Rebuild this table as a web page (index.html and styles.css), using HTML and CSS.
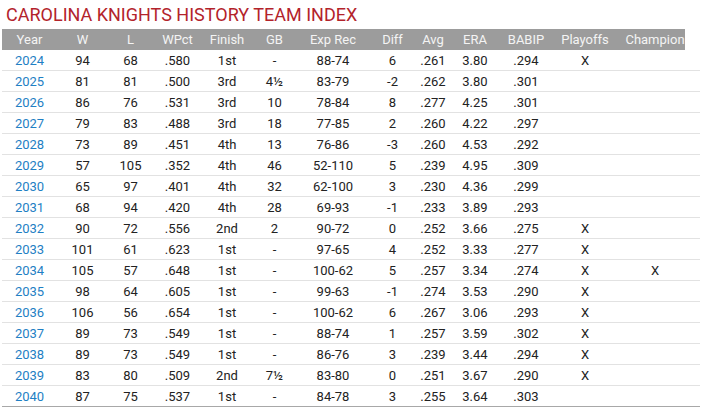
FILE: index.html
```html
<!DOCTYPE html>
<html>
<head>
<meta charset="utf-8">
<link rel="stylesheet" href="styles.css">
</head>
<body>
<h1 class="title">CAROLINA KNIGHTS HISTORY TEAM INDEX</h1>
<table class="index">
<colgroup>
<col class="c-year"><col class="c-w"><col class="c-l"><col class="c-wpct"><col class="c-finish"><col class="c-gb"><col class="c-exp"><col class="c-diff"><col class="c-avg"><col class="c-era"><col class="c-babip"><col class="c-po"><col class="c-champ">
</colgroup>
<thead>
<tr><th>Year</th><th>W</th><th>L</th><th>WPct</th><th>Finish</th><th>GB</th><th>Exp Rec</th><th>Diff</th><th>Avg</th><th>ERA</th><th>BABIP</th><th>Playoffs</th><th class="last">Champion</th></tr>
</thead>
<tbody>
<tr><td class="yr">2024</td><td>94</td><td>68</td><td>.580</td><td>1st</td><td>-</td><td>88-74</td><td>6</td><td>.261</td><td>3.80</td><td>.294</td><td>X</td><td class="last"></td></tr>
<tr><td class="yr">2025</td><td>81</td><td>81</td><td>.500</td><td>3rd</td><td>4½</td><td>83-79</td><td>-2</td><td>.262</td><td>3.80</td><td>.301</td><td></td><td class="last"></td></tr>
<tr><td class="yr">2026</td><td>86</td><td>76</td><td>.531</td><td>3rd</td><td>10</td><td>78-84</td><td>8</td><td>.277</td><td>4.25</td><td>.301</td><td></td><td class="last"></td></tr>
<tr><td class="yr">2027</td><td>79</td><td>83</td><td>.488</td><td>3rd</td><td>18</td><td>77-85</td><td>2</td><td>.260</td><td>4.22</td><td>.297</td><td></td><td class="last"></td></tr>
<tr><td class="yr">2028</td><td>73</td><td>89</td><td>.451</td><td>4th</td><td>13</td><td>76-86</td><td>-3</td><td>.260</td><td>4.53</td><td>.292</td><td></td><td class="last"></td></tr>
<tr><td class="yr">2029</td><td>57</td><td>105</td><td>.352</td><td>4th</td><td>46</td><td>52-110</td><td>5</td><td>.239</td><td>4.95</td><td>.309</td><td></td><td class="last"></td></tr>
<tr><td class="yr">2030</td><td>65</td><td>97</td><td>.401</td><td>4th</td><td>32</td><td>62-100</td><td>3</td><td>.230</td><td>4.36</td><td>.299</td><td></td><td class="last"></td></tr>
<tr><td class="yr">2031</td><td>68</td><td>94</td><td>.420</td><td>4th</td><td>28</td><td>69-93</td><td>-1</td><td>.233</td><td>3.89</td><td>.293</td><td></td><td class="last"></td></tr>
<tr><td class="yr">2032</td><td>90</td><td>72</td><td>.556</td><td>2nd</td><td>2</td><td>90-72</td><td>0</td><td>.252</td><td>3.66</td><td>.275</td><td>X</td><td class="last"></td></tr>
<tr><td class="yr">2033</td><td>101</td><td>61</td><td>.623</td><td>1st</td><td>-</td><td>97-65</td><td>4</td><td>.252</td><td>3.33</td><td>.277</td><td>X</td><td class="last"></td></tr>
<tr><td class="yr">2034</td><td>105</td><td>57</td><td>.648</td><td>1st</td><td>-</td><td>100-62</td><td>5</td><td>.257</td><td>3.34</td><td>.274</td><td>X</td><td class="last">X</td></tr>
<tr><td class="yr">2035</td><td>98</td><td>64</td><td>.605</td><td>1st</td><td>-</td><td>99-63</td><td>-1</td><td>.274</td><td>3.53</td><td>.290</td><td>X</td><td class="last"></td></tr>
<tr><td class="yr">2036</td><td>106</td><td>56</td><td>.654</td><td>1st</td><td>-</td><td>100-62</td><td>6</td><td>.267</td><td>3.06</td><td>.293</td><td>X</td><td class="last"></td></tr>
<tr><td class="yr">2037</td><td>89</td><td>73</td><td>.549</td><td>1st</td><td>-</td><td>88-74</td><td>1</td><td>.257</td><td>3.59</td><td>.302</td><td>X</td><td class="last"></td></tr>
<tr><td class="yr">2038</td><td>89</td><td>73</td><td>.549</td><td>1st</td><td>-</td><td>86-76</td><td>3</td><td>.239</td><td>3.44</td><td>.294</td><td>X</td><td class="last"></td></tr>
<tr><td class="yr">2039</td><td>83</td><td>80</td><td>.509</td><td>2nd</td><td>7½</td><td>83-80</td><td>0</td><td>.251</td><td>3.67</td><td>.290</td><td>X</td><td class="last"></td></tr>
<tr><td class="yr">2040</td><td>87</td><td>75</td><td>.537</td><td>1st</td><td>-</td><td>84-78</td><td>3</td><td>.255</td><td>3.64</td><td>.303</td><td></td><td class="last"></td></tr>
</tbody>
</table>
</body>
</html>
```
FILE: styles.css
```css
html, body {
  margin: 0;
  padding: 0;
  background: #ffffff;
}
body {
  padding-left: 2px;
  font-family: Roboto, "Liberation Sans", sans-serif;
  color: #222222;
}
.title {
  margin: 0;
  padding: 4px 0 0 4px;
  height: 29px;
  box-sizing: border-box;
  font-size: 18px;
  font-weight: 400;
  line-height: 22px;
  color: #b3232b;
  white-space: nowrap;
}
.index {
  width: 698px;
  border-collapse: collapse;
  table-layout: fixed;
  font-size: 13px;
}
.c-year { width: 55px; }
.c-w { width: 51px; }
.c-l { width: 45px; }
.c-wpct { width: 49px; }
.c-finish { width: 50px; }
.c-gb { width: 45px; }
.c-exp { width: 72px; }
.c-diff { width: 47px; }
.c-avg { width: 34px; }
.c-era { width: 50px; }
.c-babip { width: 52px; }
.c-po { width: 66px; }
.c-champ { width: 82px; }
.index th {
  background: #9c9c9c;
  color: #f4f4f4;
  font-weight: 400;
  font-size: 13px;
  height: 21px;
  padding: 0;
  text-align: center;
  white-space: nowrap;
}
.index th.last {
  padding-right: 8px;
  background: linear-gradient(to right, #9c9c9c 67px, transparent 67px);
}
.index td {
  height: 20px;
  padding: 0;
  text-align: center;
  border-bottom: 1px solid #e2e2e2;
  white-space: nowrap;
}
.index td.last {
  padding-right: 8px;
}
.index tbody tr:last-child td {
  border-bottom: 1px solid #a8a8a8;
}
.index td.yr {
  color: #1f7fc4;
}
```
